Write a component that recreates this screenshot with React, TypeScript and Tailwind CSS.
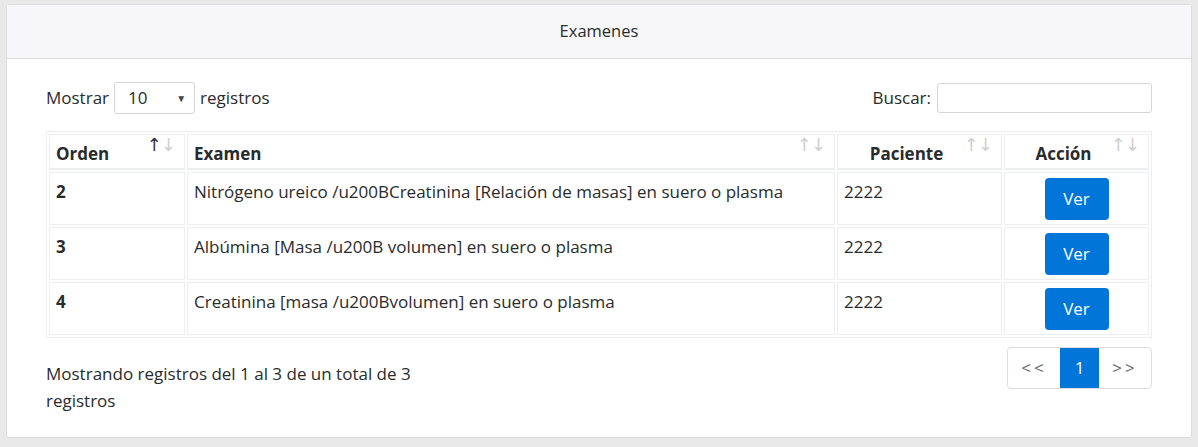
import React from 'react';

interface Examen {
  orden: number;
  examen: string;
  paciente: string;
}

const examenes: Examen[] = [
  { orden: 2, examen: 'Nitrógeno ureico /u200BCreatinina [Relación de masas] en suero o plasma', paciente: '2222' },
  { orden: 3, examen: 'Albúmina [Masa /u200B volumen] en suero o plasma', paciente: '2222' },
  { orden: 4, examen: 'Creatinina [masa /u200Bvolumen] en suero o plasma', paciente: '2222' },
];

// flechitas de ordenamiento de la cabecera
const SortIcon = ({ active }: { active?: boolean }) => (
  <span
    className="absolute right-[9px] top-[1px] flex text-[18px] font-normal leading-none tracking-[-1px]"
    style={{ fontFamily: '"DejaVu Sans", sans-serif' }}
  >
    <span className={active ? 'text-[#333]' : 'text-[#cfcfcf]'}>↑</span>
    <span className="text-[#cfcfcf]">↓</span>
  </span>
);

const App = () => {
  return (
    <div
      className="min-h-[447px] bg-[#e9e9e9] px-[6px] pt-[4px] text-[#292b2c]"
      style={{ fontFamily: '"Open Sans", "Noto Sans", sans-serif' }}
    >
      <div className="h-[434px] rounded-[3px] border border-[#dcdcdc] bg-white">
        <div className="flex h-[54px] items-center justify-center border-b border-[#dcdcdc] bg-[#f7f7f9] text-[16.5px]">
          Examenes
        </div>

        <div className="px-[39px] pt-[23px]">
          <div className="flex items-center justify-between text-[17px]">
            <div className="flex items-center gap-[5px]">
              <span>Mostrar</span>
              <div className="flex h-[32px] w-[81px] items-center justify-between rounded-[3px] border border-[#d5d5d5] pl-[13px] pr-[8px]">
                <span>10</span>
                <span className="text-[10px] text-[#444]">▼</span>
              </div>
              <span>registros</span>
            </div>
            <div className="flex items-center gap-[6px]">
              <span>Buscar:</span>
              <div className="h-[30px] w-[215px] rounded-[3px] border border-[#d5d5d5]" />
            </div>
          </div>

          <table className="mt-[17px] w-full border-separate border-spacing-0.5 border border-[#eceeef] text-[17px]">
            <thead>
              <tr className="h-[36px]">
                <th className="relative w-[136px] border border-b-2 border-[#eceeef] px-[6px] pt-[5px] text-left font-bold">
                  Orden
                  <SortIcon active />
                </th>
                <th className="relative border border-b-2 border-[#eceeef] px-[6px] pt-[5px] text-left font-bold">
                  Examen
                  <SortIcon />
                </th>
                <th className="relative w-[165px] border border-b-2 border-[#eceeef] pl-2 pr-[34px] pt-[5px] text-center font-bold">
                  Paciente
                  <SortIcon />
                </th>
                <th className="relative w-[145px] border border-b-2 border-[#eceeef] pl-2 pr-[34px] pt-[5px] text-center font-bold">
                  Acción
                  <SortIcon />
                </th>
              </tr>
            </thead>
            <tbody>
              {examenes.map((item) => (
                <tr key={item.orden}>
                  <td className="border border-[#eceeef] px-[6px] pt-[6px] align-top font-bold">{item.orden}</td>
                  <td className="border border-[#eceeef] px-[6px] pt-[6px] align-top">{item.examen}</td>
                  <td className="border border-[#eceeef] px-[6px] pt-[6px] align-top">{item.paciente}</td>
                  <td className="border border-[#eceeef] px-2 pb-[4px] pt-[5px] text-center">
                    <button className="h-[42px] w-[64px] rounded-[4px] bg-[#0275d8] text-[17px] text-white">
                      Ver
                    </button>
                  </td>
                </tr>
              ))}
            </tbody>
          </table>

          <div className="mt-[9px] flex items-start justify-between">
            <p className="mt-[13px] w-[400px] text-[17px] leading-[27px]">
              Mostrando registros del 1 al 3 de un total de 3 registros
            </p>
            <div className="flex h-[42px] overflow-hidden rounded-[4px] border border-[#dddddd] text-[17px]">
              <span className="flex w-[52px] items-center justify-center tracking-[3px] text-[#666]">&lt;&lt;</span>
              <span className="flex w-[39px] items-center justify-center bg-[#0275d8] text-white">1</span>
              <span className="flex w-[52px] items-center justify-center tracking-[3px] text-[#666]">&gt;&gt;</span>
            </div>
          </div>
        </div>
      </div>
    </div>
  );
};

export default App;
